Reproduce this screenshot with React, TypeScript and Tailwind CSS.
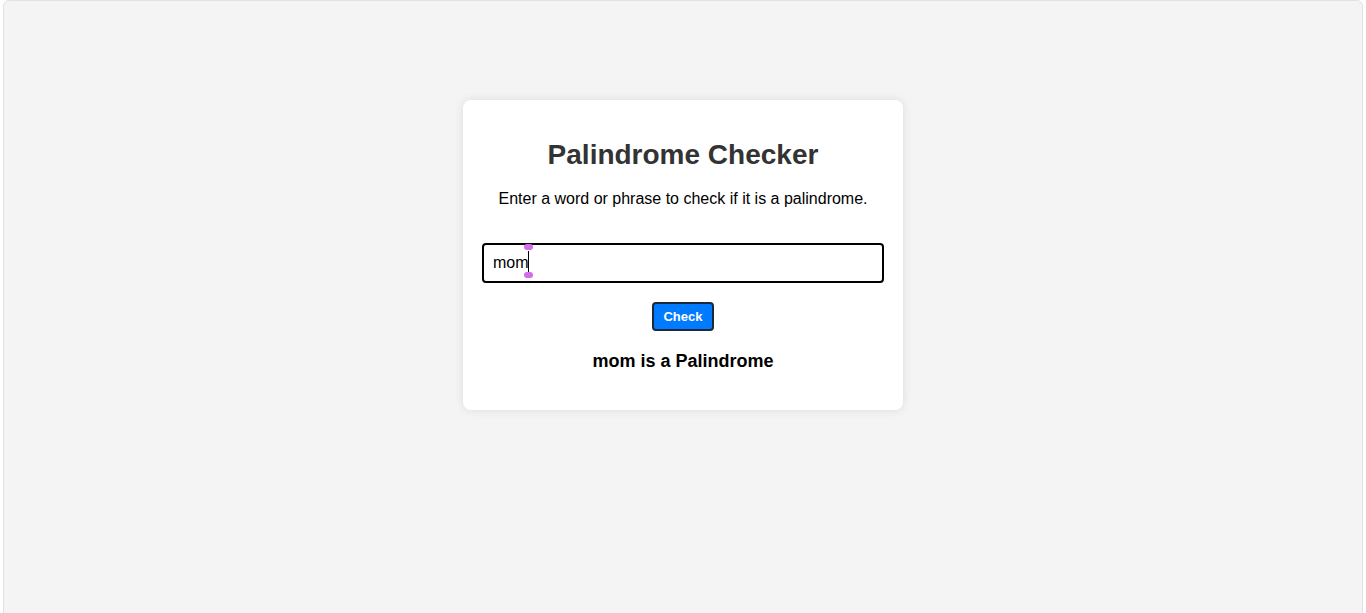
import React from "react";

export default function App() {
  return (
    <div className="w-full h-[613px] bg-white overflow-hidden" style={{ fontFamily: '"Liberation Sans", Arial, sans-serif' }}>
      <div className="mx-[3px] h-[620px] bg-[#f4f4f4] border border-[#e2e2e2] rounded-t-[6px] flex justify-center">
        <div className="mt-[99px] w-[440px] h-[310px] bg-white rounded-[8px] shadow-[0_0_10px_rgba(0,0,0,0.1)] flex flex-col items-center px-[19px]">
          <h1 className="mt-[39px] text-[28px] leading-[32px] font-bold text-[#333]">Palindrome Checker</h1>
          <p className="mt-[18px] text-[16px] leading-[20px] text-black">Enter a word or phrase to check if it is a palindrome.</p>
          <div className="relative mt-[34px] w-[402px] h-[40px]">
            <input
              readOnly
              value="mom"
              className="w-full h-full border-2 border-black rounded-[4px] px-[9px] text-[16px] text-black outline-none bg-white"
              style={{ fontFamily: '"Liberation Sans", Arial, sans-serif' }}
            />
            <span className="absolute left-[46px] top-[8px] w-[1px] h-[22px] bg-black" />
            <span className="absolute left-[42px] top-[1px] w-[9px] h-[6px] rounded-full bg-[#d56ce8]" />
            <span className="absolute left-[42px] top-[29px] w-[9px] h-[6px] rounded-full bg-[#d56ce8]" />
          </div>
          <button className="mt-[19px] w-[62px] h-[29px] bg-[#007bff] border-2 border-[#1a2a3a] rounded-[4px] text-white text-[13px] font-bold leading-none">
            Check
          </button>
          <div className="mt-[19px] text-[18px] leading-[22px] font-bold text-black">mom is a Palindrome</div>
        </div>
      </div>
    </div>
  );
}
